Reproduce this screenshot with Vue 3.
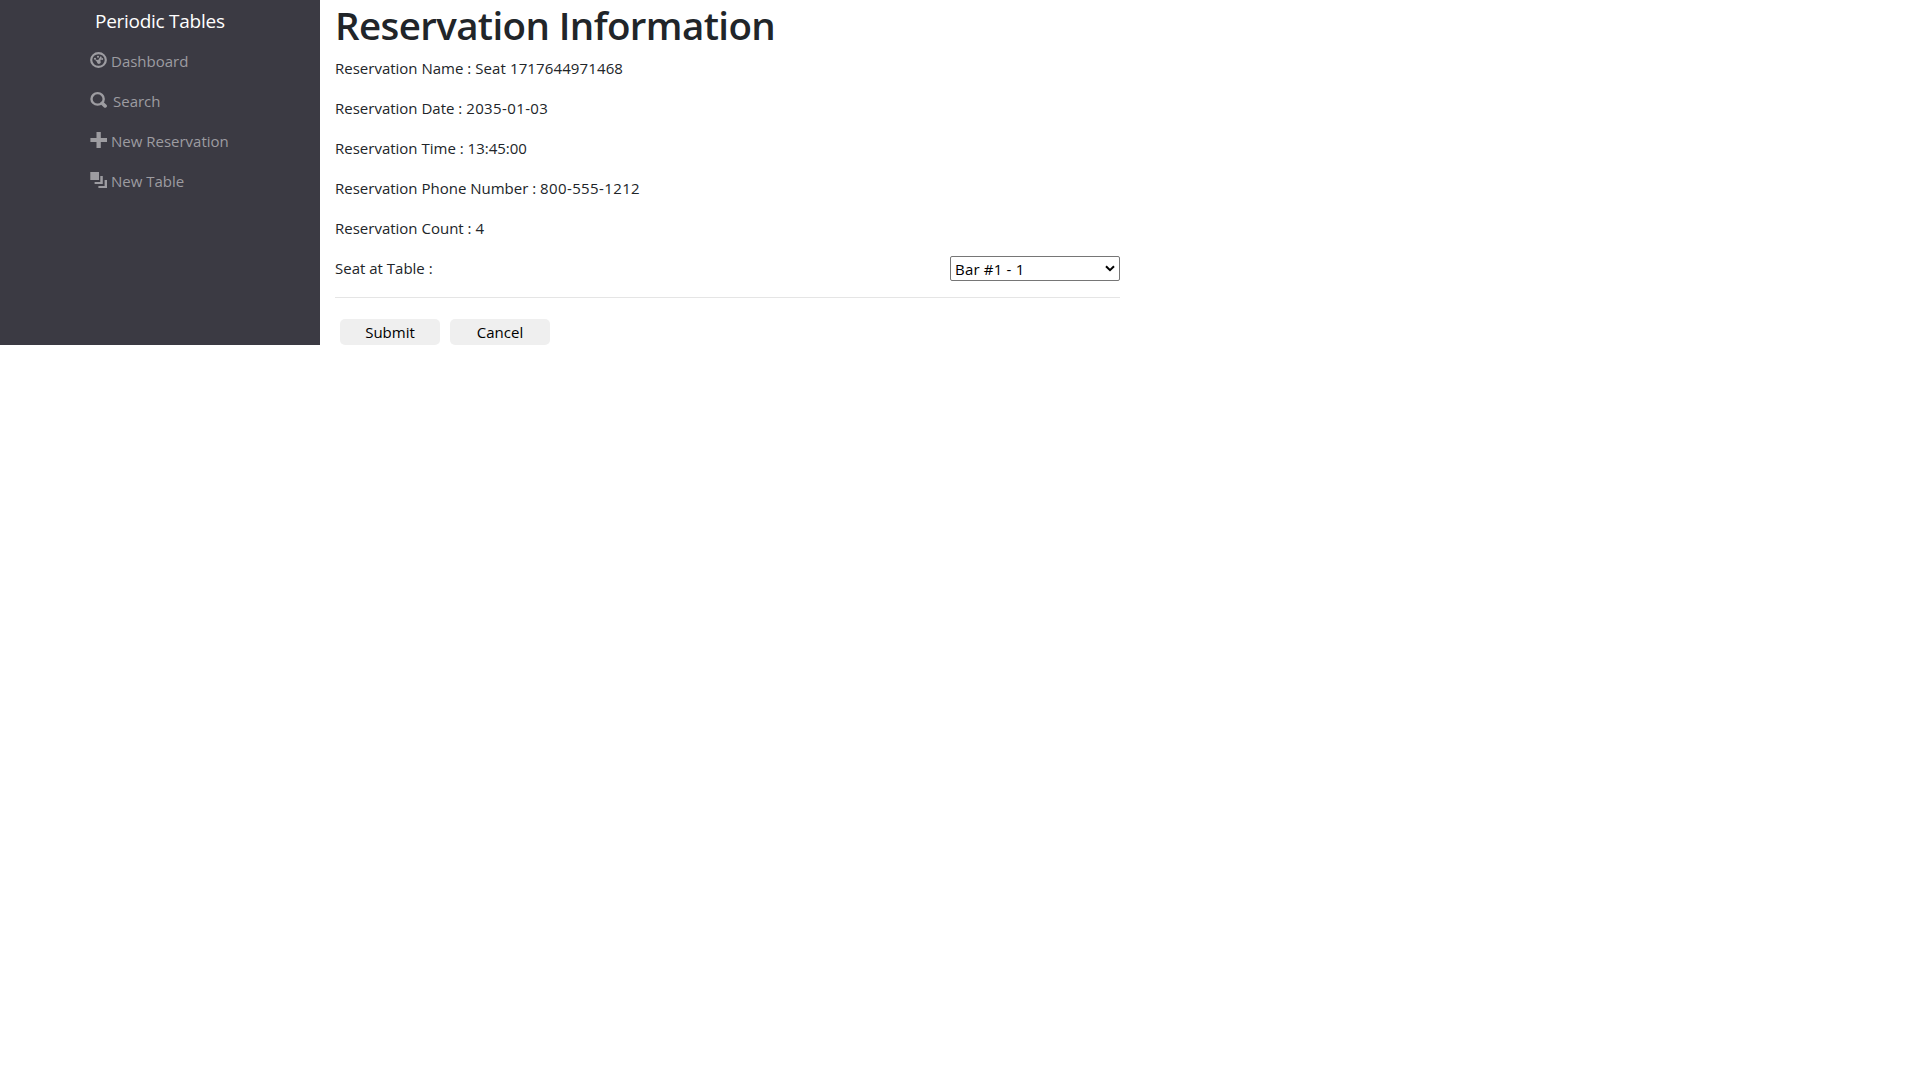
<script setup>
import { ref } from 'vue'

const details = [
  { label: 'Reservation Name', value: 'Seat 1717644971468', kind: 'name' },
  { label: 'Reservation Date', value: '2035-01-03', kind: 'hyphenated' },
  { label: 'Reservation Time', value: '13:45:00', kind: 'time' },
  { label: 'Reservation Phone Number', value: '800-555-1212', kind: 'hyphenated' },
  { label: 'Reservation Count', value: '4', kind: 'count' },
]
const table = ref('Bar #1 - 1')
</script>

<template>
  <div class="layout">
    <nav class="sidebar">
      <a class="brand">Periodic Tables</a>
      <ul class="links">
        <li>
          <svg class="icon" viewBox="0 0 17 17" preserveAspectRatio="none">
            <circle cx="8.5" cy="8.5" r="7.3" fill="none" stroke="currentColor" stroke-width="2.2" />
            <circle cx="5" cy="7.2" r="1.1" />
            <circle cx="8" cy="5" r="1.1" />
            <circle cx="12.1" cy="7.4" r="1.1" />
            <path d="M4.8 8 8.2 8.6l2.4-4 1.2.6-1.5 4.3a1.9 1.9 0 1 1-3.3 1.1z" />
          </svg>
          <span>Dashboard</span>
        </li>
        <li>
          <svg class="icon" viewBox="0 0 17 17" preserveAspectRatio="none">
            <circle cx="7.6" cy="7.4" r="6.1" fill="none" stroke="currentColor" stroke-width="2.4" />
            <path d="m12.2 12 2.9 2.9" fill="none" stroke="currentColor" stroke-width="3.6" stroke-linecap="round" />
          </svg>
          <span class="search">Search</span>
        </li>
        <li>
          <svg class="icon" viewBox="0 0 17 17" preserveAspectRatio="none">
            <path d="M6.5 0h4.3v6.4H17v4.2h-6.2V17H6.5v-6.4H.4V6.4h6.1z" />
          </svg>
          <span>New Reservation</span>
        </li>
        <li>
          <svg class="icon" viewBox="0 0 17 17" preserveAspectRatio="none">
            <path d="M.3 0H9v8.5H.3zM10.3 4.3h2.5v8.5H4.6v-2.2h5.7zM14.6 8.5H17V17H8.4v-2.2h6.2z" />
          </svg>
          <span>New Table</span>
        </li>
      </ul>
    </nav>

    <main class="content">
      <h1>Reservation Information</h1>
      <p v-for="item in details" :key="item.label">{{ item.label }} : <span :class="item.kind">{{ item.value }}</span></p>
      <div class="seat">
        <label for="table">Seat at Table :</label>
        <div class="select-box">
          <select id="table" v-model="table">
            <option>Bar #1 - 1</option>
          </select>
          <svg class="arrow" viewBox="0 0 10 7">
            <path d="m1 1.2 4 4 4-4" fill="none" stroke="#000" stroke-width="2" />
          </svg>
        </div>
      </div>
      <hr />
      <div class="actions">
        <button type="submit">Submit</button>
        <button type="button">Cancel</button>
      </div>
    </main>
  </div>
</template>

<style>
body {
  margin: 0;
  background: #fff;
}
</style>

<style scoped>
.layout {
  display: flex;
  height: 345px;
  font-family: "Open Sans", "Noto Sans", sans-serif;
  font-size: 15px;
  line-height: 24px;
  color: #212529;
}
.sidebar {
  box-sizing: border-box;
  width: 320px;
  padding-left: 90px;
  background: #3b3a43;
}
.brand {
  display: block;
  height: 48px;
  padding-left: 5px;
  font-size: 19px;
  line-height: 42px;
  letter-spacing: -0.27px;
  color: #fff;
}
.links {
  margin: 0;
  padding: 0;
  list-style: none;
  color: #9d9ca1;
}
.links li {
  display: flex;
  align-items: center;
  height: 24px;
  margin-bottom: 16px;
}
.icon {
  width: 17px;
  height: 16px;
  margin-right: 4px;
  fill: currentColor;
}
.links span {
  padding-top: 2px;
}
.links .search {
  padding-left: 2px;
}
.content {
  width: 785px;
  padding-left: 15px;
}
h1 {
  height: 48px;
  margin: 0 0 8px;
  font-size: 38.5px;
  font-weight: 550;
  line-height: 50px;
  letter-spacing: -0.62px;
}
p {
  margin: 0 0 16px;
}
.name {
  letter-spacing: 0.12px;
}
.hyphenated {
  letter-spacing: 0.38px;
}
.seat {
  display: flex;
  justify-content: space-between;
  height: 25px;
}
.select-box {
  position: relative;
  width: 170px;
  height: 25px;
}
select {
  box-sizing: border-box;
  width: 170px;
  height: 25px;
  padding: 1px 4px 1px;
  border: 1px solid #767676;
  border-radius: 2px;
  appearance: none;
  background: #fff;
  color: #000;
  font: 15px "Open Sans", sans-serif;
  letter-spacing: 0.2px;
}
.arrow {
  position: absolute;
  top: 9px;
  right: 5px;
  width: 10px;
  height: 7px;
}
hr {
  height: 1px;
  margin: 16px 0;
  border: 0;
  background: #e5e5e5;
}
.actions {
  display: flex;
  gap: 10px;
  padding: 5px 5px 0;
}
button {
  width: 100px;
  height: 26px;
  padding: 0;
  border: 0;
  border-radius: 5px;
  background: #efefef;
  color: #000;
  font: 15px/26px "Open Sans", sans-serif;
}
</style>
